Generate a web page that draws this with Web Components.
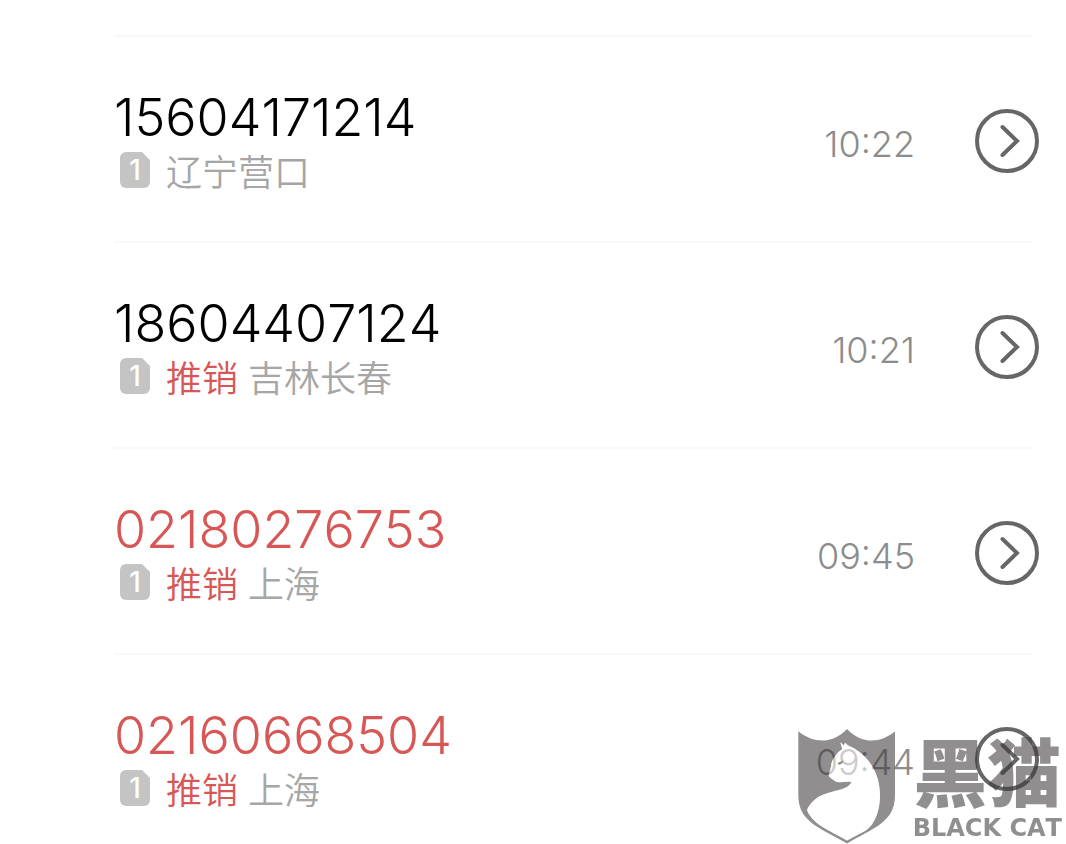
<!DOCTYPE html>
<html lang="zh-CN">
<head>
<meta charset="utf-8">
<meta name="viewport" content="width=device-width, initial-scale=1">
<title>通话记录</title>
<style>
    body {
        margin: 0;
        background: #fff;
        font-family: Inter, "Noto Sans CJK SC", sans-serif;
        font-weight: 300;
        font-kerning: none;
        overflow: hidden;
    }
</style>
</head>
<body>
<call-list>
    <call-row number="15604171214" time="10:22" sim="1">辽宁营口</call-row>
    <call-row number="18604407124" time="10:21" sim="1" tag="推销">吉林长春</call-row>
    <call-row number="02180276753" time="09:45" sim="1" tag="推销" missed>上海</call-row>
    <call-row number="02160668504" time="09:44" sim="1" tag="推销" missed>上海</call-row>
</call-list>
<brand-mark name="黑猫" latin="BLACK CAT"></brand-mark>

<script>
class CallList extends HTMLElement {
    constructor() {
        super();
        this.attachShadow({mode: 'open'}).innerHTML = `
        <style>
            :host{
                display:flex;
                flex-direction:column;
                padding:35px 34px 0 114px;
            }
        </style>
        <slot></slot>
      `;
    }

    connectedCallback(){
        this.setAttribute('role', 'list');
    }
}

class SimBadge extends HTMLElement {
    constructor() {
        super();
        this.attachShadow({mode: 'open'}).innerHTML = `
        <style>
            :host{
                display:flex;
                align-items:center;
                justify-content:center;
                width:30px;
                height:36px;
                border-radius:6px;
                background:#c4c4c4;
                clip-path:polygon(0 0, calc(100% - 8px) 0, 100% 8px, 100% 100%, 0 100%);
                color:#fff;
                font-size:28px;
                font-weight:500;
                line-height:38px;
            }
        </style>
        <slot></slot>
      `;
    }
}

class CallRow extends HTMLElement {
    constructor() {
        super();
        this.attachShadow({mode: 'open'});
    }

    connectedCallback(){
        const number = this.getAttribute('number');
        const tag = this.getAttribute('tag');
        this.setAttribute('role', 'listitem');

        this.shadowRoot.innerHTML = `
        <style>
            :host{
                display:flex;
                align-items:center;
                padding:49px 0 48px;
                border-top:2px solid #f8f8f8;
            }
            .info{
                flex:1;
            }
            .number{
                font-size:52px;
                line-height:64px;
                color:#000;
            }
            :host([missed]) .number{
                color:#d65755;
            }
            .detail{
                display:flex;
                align-items:flex-start;
                gap:10px;
                padding:2px 0 4px 6px;
                font-family:"Noto Sans CJK SC DemiLight", "Noto Sans CJK SC", sans-serif;
                font-size:36px;
                line-height:37px;
                color:#a6a6a6;
            }
            sim-badge{
                margin-right:6px;
                font-family:Inter, sans-serif;
            }
            .tag{
                color:#d65755;
            }
            time{
                padding-top:8px;
                font-size:36px;
                line-height:44px;
                color:#8c8c8c;
            }
            button{
                width:64px;
                height:64px;
                margin:3px -7px 0 60px;
                padding:0;
                border:0;
                background:none;
                cursor:pointer;
            }
            svg{
                display:block;
            }
        </style>
        <div class="info">
            <div class="number">${number}</div>
            <div class="detail">
                <sim-badge>${this.getAttribute('sim')}</sim-badge>
                ${tag ? `<span class="tag">${tag}</span>` : ''}
                <span><slot></slot></span>
            </div>
        </div>
        <time>${this.getAttribute('time')}</time>
        <button type="button" aria-label="${number}">
            <svg width="64" height="64" viewBox="0 0 64 64" fill="none" stroke="#666" stroke-width="4">
                <circle cx="32" cy="32" r="30"/>
                <path d="M27.500 18 L42 32 L27.500 46" stroke-linecap="round"/>
            </svg>
        </button>
      `;
    }
}

class BrandMark extends HTMLElement {
    constructor() {
        super();
        this.attachShadow({mode: 'open'});
    }

    connectedCallback(){
        this.shadowRoot.innerHTML = `
        <style>
            /* floats over the list and lets clicks through */
            :host{
                position:fixed;
                right:4px;
                bottom:0;
                display:flex;
                align-items:flex-end;
                gap:16px;
                color:rgba(60,57,57,0.57);
                pointer-events:none;
            }
            .words{
                display:flex;
                flex-direction:column;
                align-items:center;
            }
            .name{
                font-family:"Noto Sans CJK SC", sans-serif;
                font-size:74px;
                font-weight:900;
                line-height:86px;
            }
            .latin{
                font-family:"DejaVu Sans", sans-serif;
                font-size:24px;
                font-weight:700;
                line-height:32px;
                white-space:nowrap;
            }
        </style>
        <svg width="100" height="116" viewBox="0 0 100 116">
            <path fill="currentColor" fill-rule="evenodd" d="M1.300 3.300 C17 16 36 16 50 1 C64 16 83 16 98 3.300 V67 C98 94 78 99 50 115.500 C22 99 1.300 94 1.300 67 Z
                M10 82 C17 67 31 65 42 62 C50 60 53 57 54.700 54 C49 53 43 55 39 53.700 C36 51 32 50 31.700 47 L34 38.700 C34 33 39 25 45.300 21.300 L43.300 14.300 L47 17.500 L48 14.700 L51 17.500 C70 25 83 44 83 67 C83 84 77 99 66 104 L50 112.500 C37 104 16 98 10 82 Z"/>
            <path fill="#fff" fill-opacity="0.550" d="M10 82 C17 67 31 65 42 62 C50 60 53 57 54.700 54 C49 53 43 55 39 53.700 C36 51 32 50 31.700 47 L34 38.700 C34 33 39 25 45.300 21.300 L43.300 14.300 L47 17.500 L48 14.700 L51 17.500 C70 25 83 44 83 67 C83 84 77 99 66 104 L50 112.500 C37 104 16 98 10 82 Z"/>
            <path fill="currentColor" d="M40.500 35 L46 32.500 L45 35.500 L42 37 Z"/>
        </svg>
        <div class="words">
            <span class="name">${this.getAttribute('name')}</span>
            <span class="latin">${this.getAttribute('latin')}</span>
        </div>
      `;
    }
}

customElements.define('call-list', CallList)
customElements.define('sim-badge', SimBadge)
customElements.define('call-row', CallRow)
customElements.define('brand-mark', BrandMark)
</script>
</body>
</html>
